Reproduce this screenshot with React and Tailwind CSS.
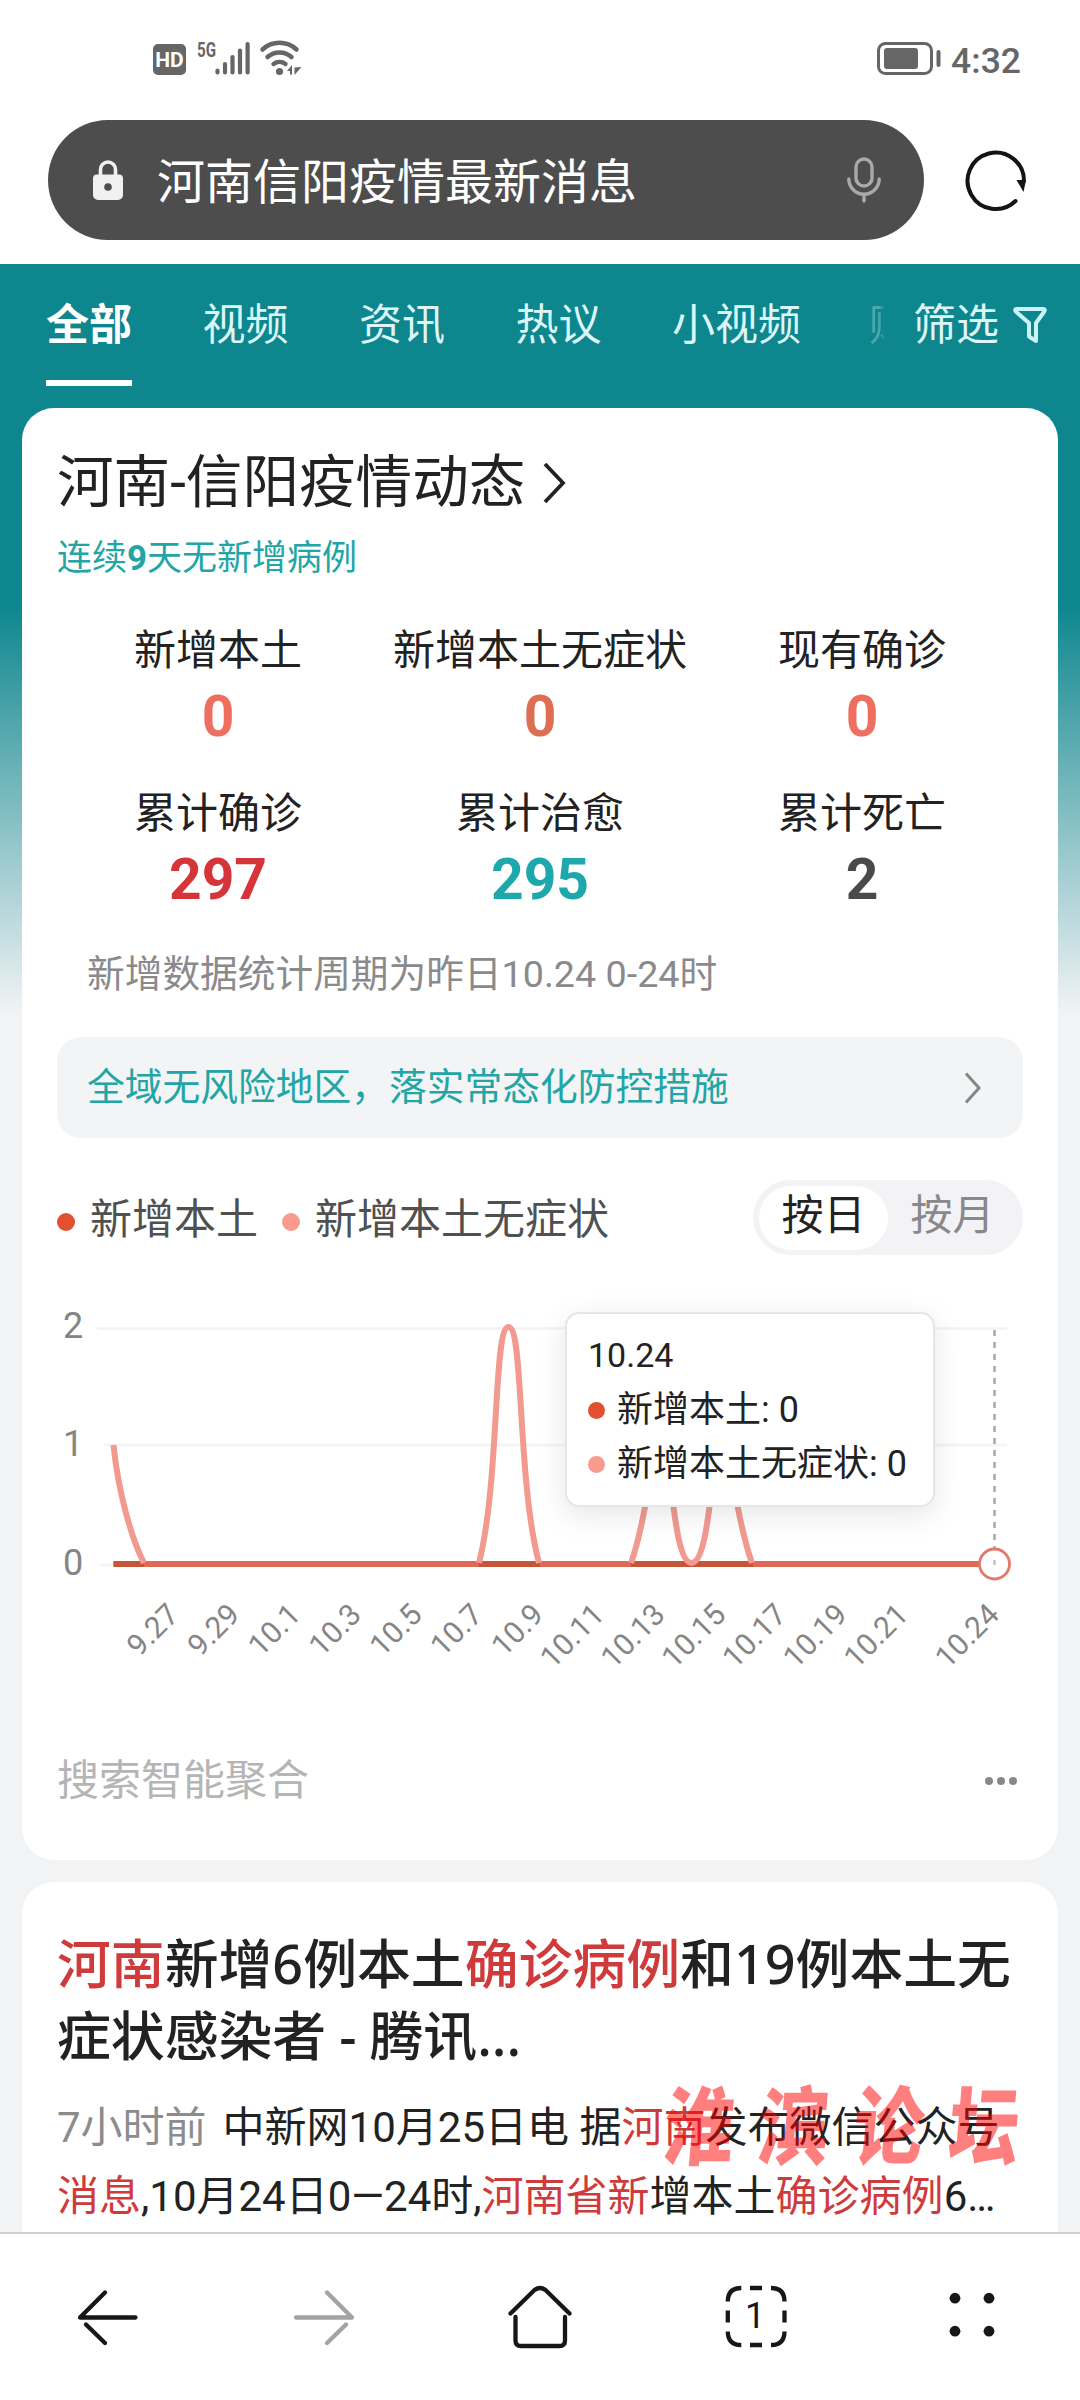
import React from "react";

const tabs = [
  { name: "全部", active: true },
  { name: "视频" },
  { name: "资讯" },
  { name: "热议" },
  { name: "小视频" },
];

const stats = [
  { label: "新增本土", value: "0", color: "text-[#ee6f60]" },
  { label: "新增本土无症状", value: "0", color: "text-[#dc6f52]" },
  { label: "现有确诊", value: "0", color: "text-[#ee6f60]" },
  { label: "累计确诊", value: "297", color: "text-[#d53538]" },
  { label: "累计治愈", value: "295", color: "text-[#1fa8ac]" },
  { label: "累计死亡", value: "2", color: "text-[#4a4a4c]" },
];

// index = days since 9.25
const dateLabels = [
  [2, "9.27"], [4, "9.29"], [6, "10.1"], [8, "10.3"], [10, "10.5"],
  [12, "10.7"], [14, "10.9"], [16, "10.11"], [18, "10.13"], [20, "10.15"],
  [22, "10.17"], [24, "10.19"], [26, "10.21"], [29, "10.24"],
];

const StatusBar = () => (
  <div className="h-[120px] pt-[30px] pl-[153px] pr-[59px] flex justify-between items-start text-[#666]">
    <div className="flex items-start">
      <div className="mt-[14px] w-[33px] h-[31px] rounded-[5px] bg-[#666] text-white text-[21px] leading-[32px] font-bold text-center">
        HD
      </div>
      <svg width="122" height="50" viewBox="186 30 122 50" fill="none" stroke="#666">
        <text x="197" y="56.500" fontSize="20.500" fontWeight="700" fill="#666" stroke="none" textLength="19" lengthAdjust="spacingAndGlyphs">5G</text>
        <g strokeWidth="4.200" strokeLinecap="round">
          <path d="M217.500 70.500v2M225 64v8.500M232.500 57v15.500M240 50.500v22M247.600 44v28.500" />
        </g>
        <path d="M262.500 49.500a25 25 0 0 1 34 0" strokeWidth="4.500" strokeLinecap="round" />
        <path d="M267.500 57a18 18 0 0 1 24 0" strokeWidth="4.500" strokeLinecap="round" />
        <path d="M273.500 64a10 10 0 0 1 12 0" strokeWidth="4.500" strokeLinecap="round" />
        <circle cx="279.500" cy="71.500" r="3.600" fill="#666" stroke="none" />
        <path d="M287 71l5-6v9.500h-2v-3.500zM294.500 75v-7.500l7-.5z" fill="#666" stroke="none" />
      </svg>
    </div>
    <div className="mt-[10px] flex items-start">
      <svg width="66" height="40" viewBox="875 40 66 40" fill="none" stroke="#666">
        <rect x="877.500" y="43.500" width="53" height="30" rx="7" strokeWidth="3" />
        <rect x="883" y="48" width="34" height="21" rx="3" fill="#666" stroke="none" />
        <path d="M937.500 52v13" strokeWidth="4" strokeLinecap="round" />
      </svg>
      <span className="ml-[9px] text-[35.500px] leading-[42px] font-medium">4:32</span>
    </div>
  </div>
);

const AddressBar = () => (
  <div className="h-[144px] pl-12 flex items-start">
    <div className="w-[876px] h-[120px] rounded-full bg-[#4d4d4d] flex items-center pl-[45px] pr-[43px]">
      <svg width="30" height="40" viewBox="0 0 30 40" fill="none">
        <path d="M7.500 17V9.500a7.500 7.500 0 0 1 15 0V17" stroke="#f0f0f0" strokeWidth="3.600" />
        <path d="M4 14.500h22a4 4 0 0 1 4 4V35a5 5 0 0 1-5 5H5a5 5 0 0 1-5-5V18.500a4 4 0 0 1 4-4z" fill="#f0f0f0" />
        <circle cx="15" cy="27" r="3.800" fill="#4d4d4d" />
      </svg>
      <span className="ml-[34px] pt-[5px] text-[48px] leading-[60px] text-white flex-1">河南信阳疫情最新消息</span>
      <svg width="34" height="46" viewBox="0 0 34 46" fill="none" stroke="#a9a9a9" strokeWidth="3.400" strokeLinecap="round">
        <rect x="9" y="2" width="16" height="27" rx="8" />
        <path d="M1.800 22a15.200 15.200 0 0 0 30.400 0M17 37v7" />
      </svg>
    </div>
    <svg className="ml-[40px] mt-[28px]" width="66" height="64" viewBox="964 148 66 64" fill="none">
      <path d="M1015.500 201A28.200 28.200 0 1 1 1024 181" stroke="#141414" strokeWidth="4" strokeLinecap="round" />
      <path d="M1016.500 180l7 12 2.500-12z" fill="#141414" />
    </svg>
  </div>
);

const Tabs = () => (
  <div className="h-[144px] pl-[46px] pr-[33px] flex items-start text-[43px] text-[#dcf6f8]">
    <div className="flex gap-[70.500px]">
      {tabs.map((tab) => (
        <div
          key={tab.name}
          className={
            tab.active
              ? "pt-[29px] h-[122px] leading-[64px] font-bold text-white border-b-[6px] border-white"
              : "pt-[29px] h-[122px] leading-[64px]"
          }
        >
          {tab.name}
        </div>
      ))}
    </div>
    {/* next tab fades out here */}
    <div className="ml-[68px] mt-[29px] w-[43px] leading-[64px] opacity-30 [mask-image:linear-gradient(90deg,#000_0px,#000_10px,transparent_16px)]">
      购
    </div>
    <div className="ml-auto pt-[29px] flex items-center leading-[64px] whitespace-nowrap">
      筛选
      <svg className="ml-[14px]" width="34" height="38" viewBox="1 0 34 38" fill="none" stroke="#c9f3f5" strokeWidth="4" strokeLinejoin="round">
        <path d="M4.500 3h27c1.500 0 1.500 1 .8 2.500L24 17v18l-7-4.500V17L3.700 5.500C3 4 3 3 4.500 3z" />
      </svg>
    </div>
  </div>
);

const dayX = (i) => 112.5 + i * 30.38;

const Chart = () => (
  <div className="relative h-[414px]">
    <svg width="1036" height="414" viewBox="22 1280 1036 414" fill="none">
      <path d="M97 1328.500H1007M104 1445H1007M100 1565H1007" stroke="#f4f4f4" strokeWidth="2.500" />
      <g fill="#858585" fontSize="36" textAnchor="middle">
        <text x="73" y="1338">2</text>
        <text x="73" y="1456">1</text>
        <text x="73" y="1574.500">0</text>
      </g>
      <path d="M994.500 1330V1552" stroke="#a9a9a9" strokeWidth="2.500" strokeDasharray="6 6" />
      <path d="M113.500 1564H995" stroke="#dc6a57" strokeWidth="6" />
      <path d="M113.500 1564H144M479 1564H540M631 1564H753" stroke="#c35638" strokeWidth="6" />
      <g stroke="#f29a90" strokeWidth="6" strokeLinejoin="round">
        <path d="M113.500 1445C118 1490 131 1538 144 1563" />
        <path d="M479 1563C500 1480 493 1327 508.500 1327S517 1480 539 1563" />
        <path d="M631 1563C650 1510 650 1445 661 1445S672 1563 691.500 1563S711 1445 721.500 1445S733 1510 752 1563" />
      </g>
      <circle cx="994.500" cy="1564" r="15" fill="#fff" stroke="#e2796b" strokeWidth="2.800" />
      <path d="M994.500 1560v5" stroke="#b5b5b5" strokeWidth="2" />
      <g fill="#858585" fontSize="30" textAnchor="end" dominantBaseline="central">
        {dateLabels.map(([i, label]) => (
          <text key={label} transform={`translate(${dayX(i)} 1609) rotate(-45)`}>
            {label}
          </text>
        ))}
      </g>
    </svg>

    {/* Tooltip */}
    <div className="absolute left-[543px] top-[32px] w-[370px] h-[195px] rounded-[14px] border-2 border-[#e6e6e6] bg-white pl-[21px] pt-[14px] text-[#222] shadow-[0_8px_30px_rgba(0,0,0,0.1)]">
      <div className="text-[34px] leading-[55px]">10.24</div>
      <div className="flex items-center text-[36px] leading-[54px] whitespace-nowrap">
        <i className="w-[17px] h-[17px] mt-px mr-[12px] rounded-full bg-[#e2502f]" />
        新增本土: 0
      </div>
      <div className="flex items-center text-[36px] leading-[54px] whitespace-nowrap">
        <i className="w-[17px] h-[17px] mt-px mr-[12px] rounded-full bg-[#f89a8d]" />
        新增本土无症状: 0
      </div>
    </div>
  </div>
);

const StatsCard = () => (
  <section className="h-[1452px] rounded-[32px] bg-white overflow-hidden">
    <div className="px-[35px]">
      <h1 className="pt-[37px] flex items-center text-[56.600px] leading-[76px] text-[#222]">
        河南-信阳疫情动态
        <svg className="ml-[16px]" width="26" height="42" viewBox="0 0 26 42" fill="none" stroke="#222" strokeWidth="3.800">
          <path d="M4 2l18 19L4 40" />
        </svg>
      </h1>
      <p className="mt-[12px] text-[35px] leading-[52px] text-[#22a5a6]">
        连续<b>9</b>天无新增病例
      </p>

      {/* Numbers */}
      <div className="mt-[34px] grid grid-cols-3">
        {stats.map((s) => (
          <div key={s.label} className="h-[163px] text-center">
            <div className="text-[42px] leading-[64px] text-[#222] whitespace-nowrap">{s.label}</div>
            <div className={`text-[57px] leading-[68px] font-bold ${s.color}`}>{s.value}</div>
          </div>
        ))}
      </div>

      <p className="mt-px pl-[30px] text-[37.700px] leading-[56px] text-[#8a8a8d]">
        新增数据统计周期为昨日10.24 0-24时
      </p>

      <div className="mt-[35px] h-[101px] rounded-[24px] bg-[#f3f4f5] pl-[30px] pr-[41px] flex items-center justify-between text-[37.750px] text-[#22a5a6]">
        <span>全域无风险地区，落实常态化防控措施</span>
        <svg width="18" height="32" viewBox="0 0 18 32" fill="none" stroke="#858585" strokeWidth="3">
          <path d="M2 1.500l13 14.500L2 30.500" />
        </svg>
      </div>

      {/* Legend + switch */}
      <div className="mt-[42px] h-[75px] flex items-center text-[42px] text-[#505050]">
        <i className="w-[18px] h-[18px] mt-[8px] rounded-full bg-[#e2502f]" />
        <span className="ml-[15px] pt-[3px]">新增本土</span>
        <i className="w-[18px] h-[18px] mt-[8px] ml-[24px] rounded-full bg-[#f89a8d]" />
        <span className="ml-[15px] pt-[3px]">新增本土无症状</span>
        <div className="ml-auto w-[270px] h-[75px] rounded-full bg-[#f3f3f5] p-[6px] flex items-start leading-[60px]">
          <span className="w-[129px] h-[64px] rounded-full bg-white text-[#222] text-center">按日</span>
          <span className="w-[129px] text-center text-[#88888d]">按月</span>
        </div>
      </div>
    </div>

    <div className="mt-[25px]">
      <Chart />
    </div>

    <div className="mt-[55px] pl-[35px] pr-[40px] flex items-center justify-between text-[42px] leading-[64px] text-[#b5b5b5]">
      <span>搜索智能聚合</span>
      <svg width="34" height="10" viewBox="0 0 34 10" fill="#888">
        <circle cx="5" cy="5" r="4" />
        <circle cx="17" cy="5" r="4" />
        <circle cx="29" cy="5" r="4" />
      </svg>
    </div>
  </section>
);

const Red = ({ children }) => <span className="text-[#cf3b3b]">{children}</span>;

const NewsCard = () => (
  <section className="relative mt-[22px] h-[350px] rounded-t-[32px] bg-white px-[35px] pt-[45px] text-[#222]">
    <h2 className="text-[53.850px] leading-[72px] font-medium whitespace-nowrap font-['Noto_Sans','Noto_Sans_CJK_SC',sans-serif]">
      <Red>河南</Red>新增6例本土<Red>确诊病例</Red>和19例本土无
      <br />
      <span className="[word-spacing:-1px]">症状感染者 - 腾讯...</span>
    </h2>
    <p className="mt-[22px] text-[42px] leading-[69px] whitespace-nowrap">
      <span className="mr-[16px] text-[#8c8c8c]">7小时前</span>
      中新网10月25日电 据<Red>河南</Red>发布微信公众号
      <br />
      <Red>消息</Red>,10月24日0—24时,<Red>河南省新</Red>增本土<Red>确诊病例</Red>6…
    </p>
    {/* Forum watermark */}
    <div className="absolute left-[642px] top-[192px] flex gap-[25px] text-[70px] leading-[110px] font-black text-[#ff0000]/50 -skew-x-6 scale-y-[1.22]">
      <span>淮</span>
      <span>滨</span>
      <span>论</span>
      <span>坛</span>
    </div>
  </section>
);

const BottomNav = () => (
  <nav className="h-[168px] border-t-2 border-[#cfcfcf] bg-white">
    <svg width="1080" height="166" viewBox="0 2234.500 1080 166" fill="none" stroke="#171717" strokeWidth="4.300" strokeLinecap="round" strokeLinejoin="round">
      <path d="M135.500 2318H80L105 2293M86 2325L105 2343.500" />
      <path d="M296 2318h56L327 2293M346 2325L327 2343.500" stroke="#a3a3a3" />
      <path d="M510.500 2314L534.500 2290.500q5.500-4 11 0L569.500 2314M515.500 2317.500v23.500q0 5.500 5.500 5.500h38.500q5.500 0 5.500-5.500V2317.500" />
      <g strokeLinecap="butt">
        <path d="M727.800 2302q0-13.500 13.500-13.500M771 2288.500q13.500 0 13.500 13.500M784.500 2332q0 13.500-13.500 13.500M741.300 2345.500q-13.500 0-13.500-13.500" />
        <path d="M750 2288.500h12M750 2345.500h12M727.800 2311v12M784.500 2311v12" />
      </g>
      <text x="755" y="2328" fontSize="36" textAnchor="middle" fill="#171717" stroke="none">1</text>
      <g fill="#171717" stroke="none">
        <circle cx="955" cy="2298.700" r="5.400" />
        <circle cx="989" cy="2298.700" r="5.400" />
        <circle cx="955" cy="2331.700" r="5.400" />
        <circle cx="989" cy="2331.700" r="5.400" />
      </g>
    </svg>
  </nav>
);

export default function App() {
  return (
    <div className="w-[1080px] h-[2400px] overflow-hidden bg-white flex flex-col font-['Roboto','Noto_Sans_CJK_SC',sans-serif]">
      <StatusBar />
      <AddressBar />
      <main className="h-[1968px] overflow-hidden bg-[#f2f3f5] bg-[linear-gradient(180deg,#0d868e_0px,#0d868e_340px,#f2f3f5_750px)]">
        <Tabs />
        <div className="px-[22px]">
          <StatsCard />
          <NewsCard />
        </div>
      </main>
      <BottomNav />
    </div>
  );
}
